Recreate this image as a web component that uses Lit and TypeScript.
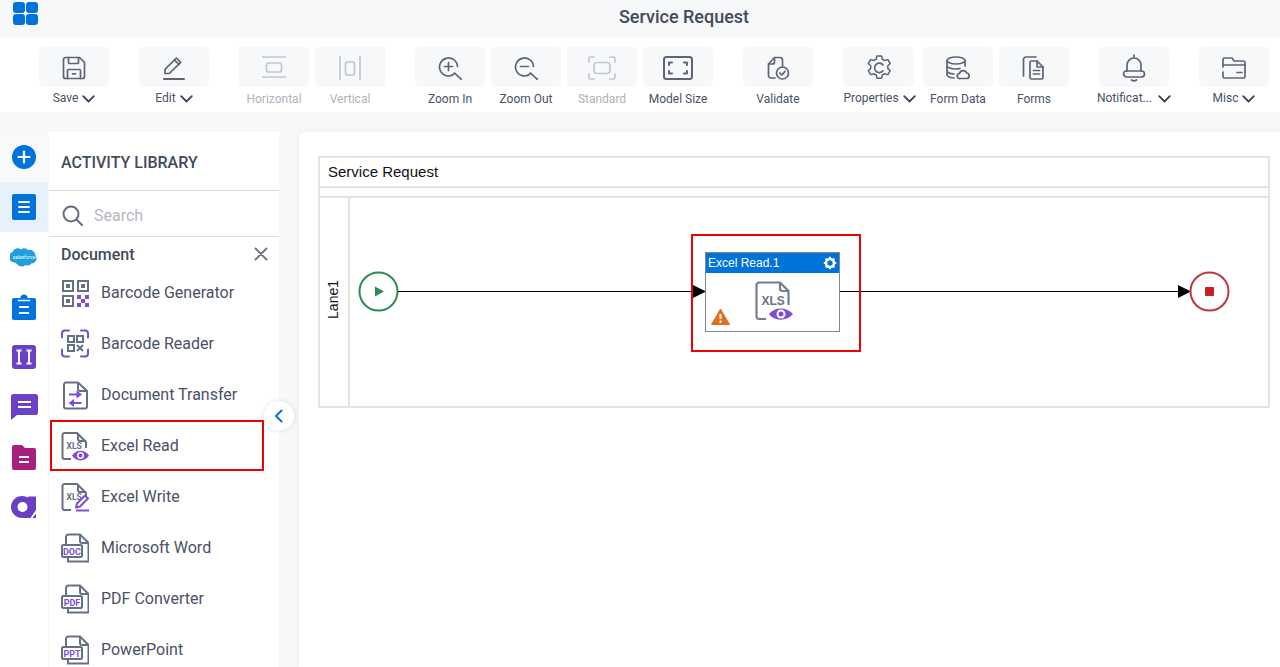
import { LitElement, html, svg, css } from 'lit';
import { customElement } from 'lit/decorators.js';

const wrap = (body: unknown, w = 24, h = 24) => html`<svg width=${w} height=${h} viewBox="0 0 ${w} ${h}" fill="none" stroke="currentColor" stroke-width="1.7" stroke-linecap="round" stroke-linejoin="round">${body}</svg>`;

const chevron = html`<svg class="chev" width="13" height="8" viewBox="0 0 13 8" fill="none" stroke="#3d4457" stroke-width="1.8" stroke-linecap="round" stroke-linejoin="round"><path d="M1.200 1.200 6.500 6.500l5.300-5.300"/></svg>`;

const toolIcons: Record<string, unknown> = {
	save: svg`<path d="M3.500 1.500h14l5 5v14a2 2 0 0 1-2 2h-17a2 2 0 0 1-2-2v-17a2 2 0 0 1 2-2z"/><path d="M6.500 1.500v5a1 1 0 0 0 1 1h8a1 1 0 0 0 1-1v-5"/><path d="M5.500 22.500v-8a1 1 0 0 1 1-1h11a1 1 0 0 1 1 1v8"/><path d="M10.500 17.800h3"/>`,
	edit: svg`<path d="M3 17.500v-4.200L14.300 2l4.400 4.400L7.300 17.500z"/><path d="M12.600 4.200l4.300 4.300"/><path d="M2 23h20" stroke-width="2"/>`,
	horizontal: svg`<path d="M0 1h24M0 21h24"/><rect x="4.500" y="7" width="15" height="9" rx="2"/>`,
	vertical: svg`<path d="M2 0v24M22 0v24"/><rect x="7.500" y="6" width="9" height="13" rx="2"/>`,
	zoomin: svg`<path d="M19.500 10.500a9 9 0 1 0-3 7.200"/><path d="M16.500 17l7 6.500"/><path d="M10.500 6.500v8M6.500 10.500h8"/>`,
	zoomout: svg`<path d="M19.500 10.500a9 9 0 1 0-3 7.200"/><path d="M16.500 17l7 6.500"/><path d="M6.500 10.500h8"/>`,
	standard: svg`<path d="M1 6V2.500A1.500 1.500 0 0 1 2.500 1H6M22 1h3.500A1.500 1.500 0 0 1 27 2.500V6M27 18v3.500a1.500 1.500 0 0 1-1.500 1.500H22M6 23H2.500A1.500 1.500 0 0 1 1 21.500V18"/><rect x="6" y="6.500" width="16" height="11" rx="3"/>`,
	model: svg`<rect x="1" y="1" width="28" height="22" rx="2.500" stroke-width="2"/><path d="M6 9V6.500h3M21 6.500h3V9M24 15v2.500h-3M9 17.500H6V15" stroke-width="2"/>`,
	validate: svg`<path d="M9 22H5a2.500 2.500 0 0 1-2.500-2.500V8L8.500 1.500H14A2.500 2.500 0 0 1 16.500 4v6"/><path d="M2.500 8h4a2 2 0 0 0 2-2V1.500"/><circle cx="16.500" cy="17" r="6"/><path d="M13.800 17l2 2 3.200-3.600"/>`,
	gear: svg`<path d="M11 1h4.500l.8 3.200 2.400 1.300 3.200-.9 2.300 3.900-2.400 2.300v2.600l2.400 2.300-2.300 3.900-3.200-.9-2.400 1.300-.8 3.200H11l-.8-3.200-2.400-1.300-3.200.9-2.300-3.900L4.700 13.400v-2.600L2.300 8.500l2.300-3.900 3.200.9 2.400-1.300z" stroke-width="1.500"/><path d="M17 10a4.700 4.700 0 1 0 0 5.800"/>`,
	data: svg`<ellipse cx="10" cy="4.500" rx="9" ry="3.500"/><path d="M1 4.500v14c0 2 3.500 3.500 7 3.500M19 4.500V10M1 9.500c0 2 4 3.500 9 3.500 1.500 0 3-.2 4-.5M1 14.500c0 2 3 3.300 7 3.500"/><path d="M14 22.500a2.500 2.500 0 0 1-.5-5 3.800 3.800 0 0 1 7.200-.5 2.800 2.800 0 0 1 .3 5.500z"/>`,
	forms: svg`<path d="M14 1H4a2.500 2.500 0 0 0-2.500 2.500V20"/><path d="M8 6.500a1.500 1.500 0 0 1 1.500-1.500H15l6 6v10.500a1.500 1.500 0 0 1-1.500 1.500h-10A1.500 1.500 0 0 1 8 21.500z"/><path d="M15 5v6h6M11.500 14.500h6M11.500 18h6"/>`,
	bell: svg`<path d="M12 1v3M5 17v-6a7 7 0 0 1 14 0v6"/><path d="M4.500 17h15a3 3 0 0 1 0 6h-15a3 3 0 0 1 0-6z"/><path d="M9.500 26q2.500 1.800 5 0"/>`,
	misc: svg`<path d="M1 11V3.500A1.500 1.500 0 0 1 2.500 2H10l2 3h9.500A1.500 1.500 0 0 1 23 6.500v14a1.500 1.500 0 0 1-1.500 1.500h-19A1.500 1.500 0 0 1 1 20.500V16"/><path d="M1 9h22M15 16.500h5"/>`,
};

interface Tool { label: string; icon: string; w?: number; h?: number; menu?: boolean; off?: boolean; wide?: boolean; long?: boolean }

const toolGroups: Tool[][] = [
	[{ label: 'Save', icon: 'save', menu: true }],
	[{ label: 'Edit', icon: 'edit', menu: true }],
	[{ label: 'Horizontal', icon: 'horizontal', off: true }, { label: 'Vertical', icon: 'vertical', off: true }],
	[{ label: 'Zoom In', icon: 'zoomin' }, { label: 'Zoom Out', icon: 'zoomout' }, { label: 'Standard', icon: 'standard', off: true, w: 28 }, { label: 'Model Size', icon: 'model', w: 30 }],
	[{ label: 'Validate', icon: 'validate' }],
	[{ label: 'Properties', icon: 'gear', menu: true, wide: true, w: 26, h: 26 }, { label: 'Form Data', icon: 'data' }, { label: 'Forms', icon: 'forms' }],
	[{ label: 'Notificat...', icon: 'bell', menu: true, h: 28, long: true }],
	[{ label: 'Misc', icon: 'misc', menu: true }],
];

const G = '#667085';
const P = '#7a4fd6';

const typedDoc = (t: string) => svg`<path d="M5 11V4a2.500 2.500 0 0 1 2.500-2.500H19l8.500 8.500v18.500H7V24" fill="none" stroke=${G} stroke-width="2"/><path d="M19 1.500V8a2 2 0 0 0 2 2h6.500" fill="none" stroke=${G} stroke-width="2"/><rect x="1" y="12" width="20" height="12" rx="1.500" fill="#fff" stroke=${G} stroke-width="2"/><text x="11" y="21.500" text-anchor="middle" font-family="Roboto, sans-serif" font-size="9" font-weight="700" fill=${P}>${t}</text>`;
const xlsDoc = svg`<path d="M10 28H3.500a2 2 0 0 1-2-2V4a2 2 0 0 1 2-2H16l9 9v6" fill="none" stroke=${G} stroke-width="2"/><path d="M17 2v6a2 2 0 0 0 2 2h6" fill="none" stroke=${G} stroke-width="2"/><text x="5.500" y="17.500" font-family="Roboto, sans-serif" font-size="8.500" font-weight="700" fill=${G}>XLS</text>`;

const libIcons: Record<string, unknown> = {
	generator: svg`<g fill="none" stroke=${G} stroke-width="2"><rect x="2" y="3" width="10" height="10"/><rect x="17" y="3" width="10" height="10"/><rect x="2" y="18" width="10" height="10"/></g><g fill=${G}><rect x="5" y="6" width="4" height="4"/><rect x="20" y="6" width="4" height="4"/><rect x="5" y="21" width="4" height="4"/></g><g fill=${P}><rect x="16" y="17" width="4" height="4"/><rect x="24" y="17" width="4" height="4"/><rect x="20" y="21" width="4" height="4"/><rect x="16" y="25" width="4" height="4"/><rect x="24" y="25" width="4" height="4"/></g>`,
	reader: svg`<path d="M1 8V4a3 3 0 0 1 3-3h4M20 1h4a3 3 0 0 1 3 3v4M27 20v4a3 3 0 0 1-3 3h-4M8 27H4a3 3 0 0 1-3-3v-4" fill="none" stroke=${P} stroke-width="2" stroke-linecap="round" transform="translate(0 0.500)"/><g fill="none" stroke=${G} stroke-width="2"><rect x="7" y="7" width="6" height="6"/><rect x="16" y="7" width="6" height="6"/><rect x="7" y="16" width="6" height="6"/><path d="M16 16l6 6M22 16l-6 6"/></g>`,
	transfer: svg`<path d="M17 2.500H5a2 2 0 0 0-2 2v22a2 2 0 0 0 2 2h19a2 2 0 0 0 2-2V11z" fill="none" stroke=${G} stroke-width="2"/><path d="M17 2.500V9a2 2 0 0 0 2 2h7" fill="none" stroke=${G} stroke-width="2"/><path d="M8 14.500h8" stroke=${P} stroke-width="2"/><path d="M15.500 10.500l5.500 4-5.500 4zM13 19l-5.500 4 5.500 4z" fill=${P}/><path d="M12 23h8.500" stroke=${P} stroke-width="2"/>`,
	read: svg`${xlsDoc}<path d="M11 24.500c4-6.500 13-6.500 17 0-4 6.500-13 6.500-17 0z" fill=${P}/><circle cx="19.500" cy="24.500" r="3.500" fill="#fff"/><circle cx="19.500" cy="24.500" r="2" fill=${P}/>`,
	write: svg`${xlsDoc}<path d="M15 25.500l1-4 8-8 3 3-8 8z" fill="#fff" stroke=${P} stroke-width="2" stroke-linejoin="round"/><path d="M15 28.500h13" stroke=${P} stroke-width="2"/>`,
	doc: typedDoc('DOC'),
	pdf: typedDoc('PDF'),
	ppt: typedDoc('PPT'),
};

const libRows = [
	{ label: 'Barcode Generator', icon: 'generator' },
	{ label: 'Barcode Reader', icon: 'reader' },
	{ label: 'Document Transfer', icon: 'transfer' },
	{ label: 'Excel Read', icon: 'read', marked: true },
	{ label: 'Excel Write', icon: 'write' },
	{ label: 'Microsoft Word', icon: 'doc' },
	{ label: 'PDF Converter', icon: 'pdf' },
	{ label: 'PowerPoint', icon: 'ppt' },
];

const railIcons = [
	svg`<circle cx="14" cy="14" r="12" fill="#0073dd"/><path d="M14 8.500v11M8.500 14h11" stroke="#fff" stroke-width="2.200" stroke-linecap="round"/>`,
	svg`<rect x="2" y="1" width="24" height="26" rx="2" fill="#0073dd"/><path d="M9 9h10M9 14h10M9 19h10" stroke="#fff" stroke-width="1.800" stroke-linecap="round"/>`,
	svg`<path d="M7 21a5 5 0 0 1-2-1.500A5.500 5.500 0 0 1 2.500 9 5.500 5.500 0 0 1 11 6.500a5 5 0 0 1 7 .5 6 6 0 0 1 7.500 5.500 5 5 0 0 1-4 8 5 5 0 0 1-6 1.500 5.500 5.500 0 0 1-8.500-1z" fill="#1f9fdc"/><text x="14" y="15.500" text-anchor="middle" font-family="Roboto, sans-serif" font-size="5" font-style="italic" fill="#fff">salesforce</text>`,
	svg`<path d="M4 5h6.500a3.500 3.500 0 0 1 7 0H24a2 2 0 0 1 2 2v18a2 2 0 0 1-2 2H4a2 2 0 0 1-2-2V7a2 2 0 0 1 2-2z" fill="#0073dd"/><path d="M8 7.500h12" stroke="#fff" stroke-width="1.500"/><path d="M9 14h10M9 20h10" stroke="#fff" stroke-width="2"/>`,
	svg`<rect x="2" y="2" width="24" height="24" rx="3" fill="#6b41c6"/><path d="M6.500 7.500h5M9 7.500v13M6.500 20.500h5M16.500 7.500h5M19 7.500v13M16.500 20.500h5" stroke="#fff" stroke-width="2"/>`,
	svg`<path d="M3.500 1h22A2.500 2.500 0 0 1 28 3.500v16a2.500 2.500 0 0 1-2.500 2.500H7l-6 5V3.500A2.500 2.500 0 0 1 3.500 1z" fill="#6b41c6"/><path d="M8 9h13M8 14h13" stroke="#fff" stroke-width="2"/>`,
	svg`<path d="M2 4a2 2 0 0 1 2-2h8l3 3h9a2 2 0 0 1 2 2v18a2 2 0 0 1-2 2H4a2 2 0 0 1-2-2z" fill="#a8207e"/><path d="M9 14h10M9 19h10" stroke="#fff" stroke-width="2"/>`,
	svg`<circle cx="12" cy="14" r="11" fill="#6b3fc4"/><path d="M18 3.500h8V25H14z" fill="#6b3fc4"/><circle cx="12.500" cy="14" r="5" fill="#fff"/><path d="M26 17l-5.500 8h2l3.500-4.500z" fill="#fff"/>`,
];

@customElement('app-root')
export class AppRoot extends LitElement {
	static styles = css`
		:host {
			display: flex;
			flex-direction: column;
			height: 100vh;
			overflow: hidden;
			background: #f7f8fa;
			color: #4a5166;
			font-family: Roboto, 'Liberation Sans', sans-serif;
		}
		.topbar {
			height: 37px;
			flex: none;
			display: flex;
			align-items: center;
			justify-content: center;
			position: relative;
			background: #f7f8fa;
			padding: 0 0 4px 88px;
			box-sizing: border-box;
			font-size: 18px;
			font-weight: 500;
			color: #434a5c;
		}
		.logo {
			position: absolute;
			left: 13px;
			top: 2px;
			width: 25px;
			height: 23px;
			display: grid;
			grid-template-columns: 1fr 1fr;
			gap: 1px;
		}
		.logo span {
			background: #0073dd;
			border-radius: 3px;
		}
		.toolbar {
			height: 75px;
			flex: none;
			box-sizing: border-box;
			background: #fff;
			padding: 10px 0 0 39px;
			display: flex;
			gap: 30px;
		}
		.group {
			display: flex;
			gap: 6px;
		}
		.tool {
			width: 70px;
			display: flex;
			flex-direction: column;
			align-items: center;
		}
		.tool.wide {
			width: 71px;
			margin-right: 3px;
		}
		.tool .btn {
			width: 100%;
			height: 40px;
			flex: none;
			box-sizing: border-box;
			padding-top: 2px;
			background: #f7f8fa;
			border-radius: 5px;
			display: flex;
			align-items: center;
			justify-content: center;
			color: #5c6478;
		}
		.tool.off .btn {
			color: #c3c6ce;
			border-radius: 0 5px 5px 0;
		}
		.tool.off + .tool.off .btn {
			border-radius: 5px 0 0 5px;
		}
		.tool .label {
			margin-top: 4px;
			height: 15px;
			line-height: 15px;
			padding-top: 1px;
			font-size: 12px;
			white-space: nowrap;
			display: flex;
			align-items: center;
			gap: 4px;
			color: #4a5166;
		}
		.tool.menu .label {
			padding-top: 0;
		}
		.tool.wide .label {
			margin-left: 2px;
		}
		.tool.long .label {
			gap: 6px;
		}
		.tool.off .label {
			color: #afb3bc;
		}
		.main {
			flex: 1;
			min-height: 0;
			display: flex;
		}
		.rail {
			width: 48px;
			flex: none;
			margin-top: 20px;
			background: #fff;
			display: flex;
			flex-direction: column;
		}
		.rail div {
			height: 50px;
			flex: none;
			display: flex;
			align-items: center;
			justify-content: center;
		}
		.rail div.first {
			background: #f8f9fb;
		}
		.rail div.on {
			background: #e6f1fb;
		}
		.library {
			width: 230px;
			margin: 20px 0 0 1px;
			flex: none;
			background: #fff;
			position: relative;
			display: flex;
			flex-direction: column;
		}
		.lib-title {
			height: 59px;
			flex: none;
			box-sizing: border-box;
			padding: 2px 12px 0;
			display: flex;
			align-items: center;
			font-size: 16px;
			font-weight: 500;
			color: #434a5c;
			border-bottom: 1px solid #dcdee3;
		}
		.search {
			height: 46px;
			flex: none;
			box-sizing: border-box;
			padding: 3px 12px 0 13px;
			display: flex;
			align-items: center;
			gap: 11px;
			font-size: 16px;
			color: #b5b8c2;
			border-bottom: 1px solid #dcdee3;
		}
		.search svg {
			color: #646c80;
		}
		.cat {
			height: 30px;
			flex: none;
			display: flex;
			align-items: center;
			justify-content: space-between;
			padding: 4px 11px 0 12px;
			box-sizing: border-box;
			font-size: 16px;
			font-weight: 500;
			color: #434a5c;
		}
		.row {
			height: 51px;
			flex: none;
			display: flex;
			align-items: center;
			gap: 12px;
			padding-left: 12px;
			font-size: 16px;
			position: relative;
		}
		.row.marked::after {
			content: '';
			position: absolute;
			left: 1px;
			top: 0;
			width: 210px;
			height: 47px;
			border: 2px solid #ee0000;
		}
		.collapse {
			position: absolute;
			left: 215px;
			top: 269px;
			width: 30px;
			height: 30px;
			border-radius: 50%;
			background: #fff;
			box-shadow: 0 0 4px rgba(60, 70, 90, 0.18);
			display: flex;
			align-items: center;
			justify-content: center;
		}
		.canvas {
			flex: 1;
			margin: 20px 0 0 20px;
			background: #fff;
			border-radius: 6px 0 0 0;
			box-shadow: 0 0 6px rgba(60, 70, 90, 0.08);
			padding: 24px 10px 0 19px;
			min-width: 0;
		}
		.pool {
			height: 252px;
			box-sizing: border-box;
			border: 2px solid #e4e4e4;
			display: flex;
			flex-direction: column;
			font-family: 'Liberation Sans', Arial, sans-serif;
			color: #111;
		}
		.pool-head {
			height: 30px;
			flex: none;
			box-sizing: border-box;
			border-bottom: 2px solid #e4e4e4;
			padding: 0 0 2px 8px;
			display: flex;
			align-items: center;
			font-size: 15px;
		}
		.pool-gap {
			height: 10px;
			flex: none;
			box-sizing: border-box;
			border-bottom: 2px solid #e4e4e4;
		}
		.lane {
			flex: 1;
			display: flex;
			min-height: 0;
		}
		.lane-name {
			width: 30px;
			flex: none;
			box-sizing: border-box;
			border-right: 2px solid #e4e4e4;
			padding: 0 3px 5px 0;
			display: flex;
			align-items: center;
			justify-content: center;
			font-size: 14px;
		}
		.lane-name span {
			writing-mode: vertical-rl;
			transform: rotate(180deg);
		}
		.flow {
			flex: 1;
			position: relative;
		}
		.flow > svg {
			position: absolute;
			inset: 0;
		}
		.task {
			position: absolute;
			left: 355px;
			top: 54px;
			width: 135px;
			height: 80px;
			box-sizing: border-box;
			border: 1px solid #85878a;
			background: #fff;
		}
		.task-head {
			height: 20px;
			background: #0073d9;
			color: #fff;
			font-size: 12px;
			display: flex;
			align-items: center;
			justify-content: space-between;
			padding: 0 2px;
		}
		.task-icon {
			position: absolute;
			left: 49px;
			top: 28px;
		}
		.task-warn {
			position: absolute;
			left: 5px;
			top: 55px;
		}
		.task-mark {
			position: absolute;
			left: 341px;
			top: 36px;
			width: 166px;
			height: 114px;
			border: 2px solid #ee0000;
		}
	`;

	renderTool(t: Tool) {
		return html`<div class="tool ${t.off ? 'off' : ''} ${t.menu ? 'menu' : ''} ${t.wide ? 'wide' : ''} ${t.long ? 'long' : ''}">
			<div class="btn">${wrap(toolIcons[t.icon], t.w ?? 24, t.h ?? 24)}</div>
			<div class="label">${t.label}${t.menu ? chevron : ''}</div>
		</div>`;
	}

	render() {
		return html`
			<div class="topbar">
				<div class="logo"><span></span><span></span><span></span><span></span></div>
				Service Request
			</div>
			<div class="toolbar">
				${toolGroups.map((g) => html`<div class="group">${g.map((t) => this.renderTool(t))}</div>`)}
			</div>
			<div class="main">
				<div class="rail">
					${railIcons.map((ic, i) => html`<div class=${i === 1 ? 'on' : i === 0 ? 'first' : ''}><svg width="28" height="28" viewBox="0 0 28 28">${ic}</svg></div>`)}
				</div>
				<div class="library">
					<div class="lib-title">ACTIVITY LIBRARY</div>
					<div class="search">
						<svg width="21" height="21" viewBox="0 0 21 21" fill="none" stroke="currentColor" stroke-width="2" stroke-linecap="round"><circle cx="9" cy="9" r="7.500"/><path d="M14.500 14.500l5.500 5.500"/></svg>
						Search
					</div>
					<div class="cat">
						Document
						<svg width="14" height="14" viewBox="0 0 14 14" stroke="#6b7285" stroke-width="1.800" stroke-linecap="round"><path d="M1.500 1.500l11 11M12.500 1.500l-11 11"/></svg>
					</div>
					${libRows.map((r) => html`<div class="row ${r.marked ? 'marked' : ''}">
						<svg width="28" height="30" viewBox="0 0 28 30">${libIcons[r.icon]}</svg>
						${r.label}
					</div>`)}
					<div class="collapse">
						<svg width="10" height="14" viewBox="0 0 10 14" fill="none" stroke="#0073dd" stroke-width="2" stroke-linecap="round" stroke-linejoin="round"><path d="M7.500 1.500 2 7l5.500 5.500"/></svg>
					</div>
				</div>
				<div class="canvas">
					<div class="pool">
						<div class="pool-head">Service Request</div>
						<div class="pool-gap"></div>
						<div class="lane">
							<div class="lane-name"><span>Lane1</span></div>
							<div class="flow">
								<svg width="918" height="208" viewBox="350 198 918 208">
									<circle cx="378.500" cy="291.500" r="19" fill="#fff" stroke="#2e8b57" stroke-width="2"/>
									<path d="M375 286.500l9 5-9 5z" fill="#2e8b57"/>
									<path d="M398 291.500h296M840 291.500h339" stroke="#000" stroke-width="1.200"/>
									<path d="M693 285l13 6.500-13 6.500zM1178 285l13 6.500-13 6.500z" fill="#000"/>
									<circle cx="1209.500" cy="291.500" r="19" fill="#fff" stroke="#c0363c" stroke-width="2"/>
									<rect x="1205" y="287" width="9" height="9" rx="1" fill="#cc1f1f"/>
								</svg>
								<div class="task">
									<div class="task-head">
										Excel Read.1
										<svg width="14" height="14" viewBox="0 0 14 14"><circle cx="7" cy="7" r="4" fill="none" stroke="#fff" stroke-width="2.600"/><path d="M7 .8v2.400M7 10.800v2.400M.8 7h2.400M10.800 7h2.400M2.600 2.600l1.700 1.700M9.700 9.700l1.700 1.700M2.600 11.400l1.700-1.700M9.700 4.300l1.700-1.700" stroke="#fff" stroke-width="2"/></svg>
									</div>
									<svg class="task-icon" width="40" height="42" viewBox="0 0 40 42">
										<path d="M11 38H4a2.500 2.500 0 0 1-2.500-2.500V4A2.500 2.500 0 0 1 4 1.500h21l8.500 8.500v14" fill="none" stroke="#767d90" stroke-width="2.200"/>
										<path d="M25 1.500v6a2.500 2.500 0 0 0 2.500 2.500h6" fill="none" stroke="#767d90" stroke-width="2.200"/>
										<text x="6.500" y="23.500" font-family="'Liberation Sans', sans-serif" font-size="12" font-weight="700" fill="#6b7285">XLS</text>
										<path d="M14 33c5-7.500 18-7.500 24 0-6 7.500-19 7.500-24 0z" fill="#7a4fd6"/>
										<circle cx="26" cy="33" r="4.500" fill="#fff"/>
										<circle cx="26" cy="33" r="2.500" fill="#7a4fd6"/>
									</svg>
									<svg class="task-warn" width="19" height="18" viewBox="0 0 19 18">
										<path d="M9.500 1 18.500 16.500H.5z" fill="#e0701f" stroke="#e0701f" stroke-linejoin="round"/>
										<path d="M9.500 6v5" stroke="#fff" stroke-width="2"/>
										<circle cx="9.500" cy="13.800" r="1.200" fill="#fff"/>
									</svg>
								</div>
								<div class="task-mark"></div>
							</div>
						</div>
					</div>
				</div>
			</div>
		`;
	}
}
